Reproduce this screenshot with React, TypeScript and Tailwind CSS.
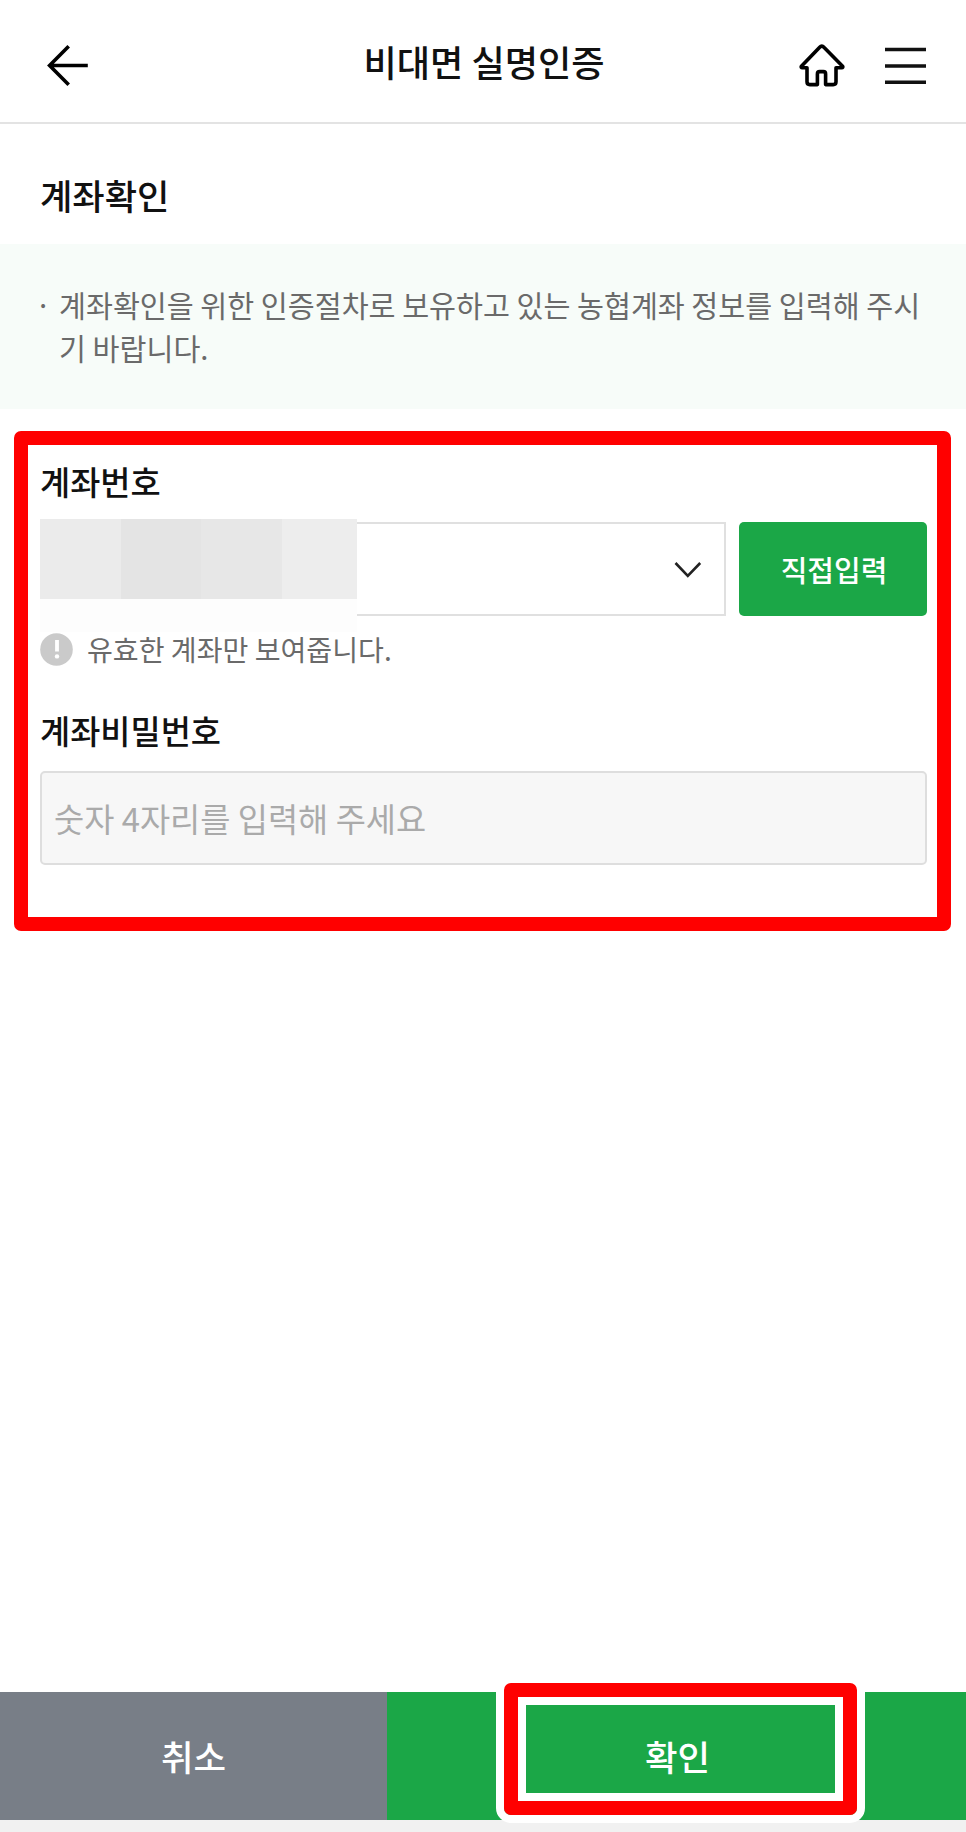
import type { ReactNode } from 'react';

type FieldLabelProps = {
  htmlFor: string;
  className?: string;
  children: ReactNode;
};

const redactedBlocks = [
  'w-[81px] bg-[#ebebeb]',
  'w-[80px] bg-[#e4e4e4]',
  'w-[81px] bg-[#e7e7e7]',
  'w-[75px] bg-[#ededed]',
];

function BackIcon() {
  return (
    <svg width="42" height="42" viewBox="0 0 42 42" fill="none" stroke="#000" strokeWidth="3.6">
      <path d="M22.7 1.3 3.6 20.5l19.1 19.2M3.6 20.5h38.2" />
    </svg>
  );
}

function HomeIcon() {
  return (
    <svg
      width="46"
      height="44"
      viewBox="0 0 46 44"
      fill="none"
      stroke="#000"
      strokeWidth="3.6"
      strokeLinejoin="round"
      strokeLinecap="round"
    >
      <path d="M20.7 3.2 2.4 22.2c-.5.8 0 1.6.8 1.6H8v14c0 1.9 1 2.8 2.8 2.8h7.6V30c0-1.6.8-2.4 2.2-2.4h3.8c1.4 0 2.2.8 2.2 2.4v10.6h7.6c1.8 0 2.8-.9 2.8-2.8v-14h5.8c.8 0 1.3-.8.8-1.6L24.9 3.2c-1.3-1.4-2.9-1.4-4.2 0Z" />
    </svg>
  );
}

function MenuIcon() {
  return (
    <svg width="41" height="38" viewBox="0 0 41 38" stroke="#111" strokeWidth="3.6">
      <path d="M0 2.5h41M0 19h41M0 35.2h41" />
    </svg>
  );
}

function FieldLabel({ htmlFor, className = '', children }: FieldLabelProps) {
  return (
    <label
      htmlFor={htmlFor}
      className={`block h-10 text-[32.8px] leading-10 font-medium text-[#111] ${className}`}
    >
      {children}
    </label>
  );
}

function Header() {
  return (
    <header className="grid h-[124px] grid-cols-[1fr_auto_1fr] items-center border-b-2 border-[#e3e3e3] pr-10 pl-[38px]">
      <button type="button" aria-label="이전" className="mt-[10px] ml-[8px] justify-self-start">
        <BackIcon />
      </button>
      <h1 className="mr-[-2px] ml-[2px] text-[36.2px] leading-[52px] font-medium text-[#111]">비대면 실명인증</h1>
      <div className="mt-[10px] flex items-center gap-10 justify-self-end">
        <button type="button" aria-label="홈">
          <HomeIcon />
        </button>
        <button type="button" aria-label="메뉴">
          <MenuIcon />
        </button>
      </div>
    </header>
  );
}

function AccountForm() {
  return (
    <section className="mr-[15px] ml-[14px] mt-[22px] h-[500px] rounded-[7px] border-[14px] border-[#ff0000] pt-4 pr-[10px] pl-3">
      <FieldLabel htmlFor="account">계좌번호</FieldLabel>

      <div className="relative mt-[21px] flex gap-[13px]">
        <button
          id="account"
          type="button"
          aria-label="계좌 선택"
          className="flex h-[94px] w-[686px] items-center justify-end border-2 border-[#e0e0e0] pt-[2px] pr-[22px]"
        >
          <svg width="28" height="18" viewBox="0 0 28 18" fill="none" stroke="#222" strokeWidth="2.6">
            <path d="m1.5 2 12.3 12.8L26.2 2" />
          </svg>
        </button>
        <button
          type="button"
          className="h-[94px] flex-1 rounded-[5px] bg-[#1ba747] pt-[2px] pl-[2px] text-[29px] font-medium text-white"
        >
          직접입력
        </button>

        {/* masked account number */}
        <div className="absolute top-[-3px] left-0 h-[113px] w-[317px] bg-[#fdfdfd]">
          <div className="flex h-20">
            {redactedBlocks.map((block) => (
              <div key={block} className={block} />
            ))}
          </div>
        </div>
      </div>

      <p className="mt-[13px] flex h-10 items-center text-[28.1px] text-[#6a6a6a]">
        <svg width="33" height="33" viewBox="0 0 33 33" className="mr-[14px] shrink-0">
          <circle cx="16.5" cy="16.5" r="16.3" fill="#cacaca" />
          <path d="M17 7v11.5" stroke="#fff" strokeWidth="3.8" />
          <circle cx="17" cy="23.4" r="2.2" fill="#fff" />
        </svg>
        유효한 계좌만 보여줍니다.
      </p>

      <FieldLabel htmlFor="password" className="mt-[41px]">
        계좌비밀번호
      </FieldLabel>
      <input
        id="password"
        type="password"
        placeholder="숫자 4자리를 입력해 주세요"
        className="mt-[21px] block h-[94px] w-full rounded-[5px] border-2 border-[#dedede] bg-[#f7f7f7] px-3 pb-[2px] text-[32.8px] placeholder:text-[#aaa]"
      />
    </section>
  );
}

function BottomBar() {
  return (
    <footer className="mt-auto flex h-[140px] border-b-[12px] border-[#f1f1f1] text-[35.4px] font-medium text-white">
      <button type="button" className="w-[387px] bg-[#787e87]">
        취소
      </button>
      <button type="button" className="relative flex-1 bg-[#1ba747] pl-[2px]">
        확인
        <span className="absolute top-[-17px] left-[109px] h-[148px] w-[369px] rounded-[15px] border-8 border-white">
          <span className="block h-full rounded-[7px] border-[14px] border-[#ff0000]">
            <span className="block h-full border-8 border-white" />
          </span>
        </span>
      </button>
    </footer>
  );
}

export default function App() {
  return (
    <div className="flex h-[1832px] w-[966px] flex-col overflow-hidden bg-white font-['Noto_Sans_CJK_KR',sans-serif]">
      <Header />

      <h2 className="mt-[46px] ml-10 h-[74px] text-[35.2px] leading-[50px] font-medium text-[#111]">
        계좌확인
      </h2>

      <div className="flex h-[165px] bg-[#f7fcf9] pt-[39px] pr-9 pl-[35px] text-[29.3px] leading-[43px] text-[#6a6a6a]">
        <span className="w-6 shrink-0">·</span>
        <p className="break-all">
          계좌확인을 위한 인증절차로 보유하고 있는 농협계좌 정보를 입력해 주시기 바랍니다.
        </p>
      </div>

      <AccountForm />
      <BottomBar />
    </div>
  );
}
